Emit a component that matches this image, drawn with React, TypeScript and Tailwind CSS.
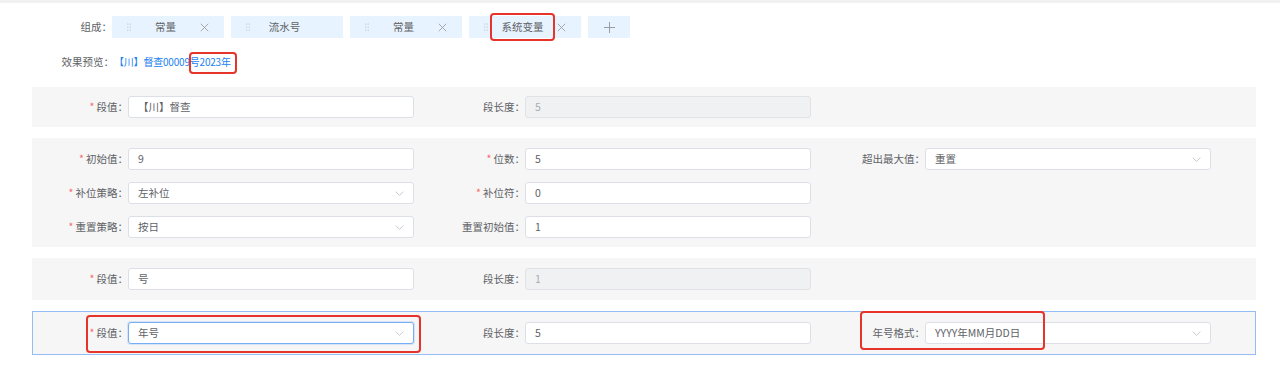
import React from "react";

function Chevron() {
  return (
    <svg width="9" height="5" viewBox="0 0 9 5" fill="none">
      <path d="M0.7 0.6l3.8 3.8 3.8-3.8" stroke="#c0c4cc" strokeWidth="0.9" />
    </svg>
  );
}

function XIcon() {
  return (
    <svg width="9" height="9" viewBox="0 0 9 9" fill="none">
      <path d="M0.8 0.8l7.4 7.4M8.2 0.8l-7.4 7.4" stroke="#9a9da3" strokeWidth="0.9" />
    </svg>
  );
}

function PlusIcon() {
  return (
    <svg width="11" height="11" viewBox="0 0 11 11" fill="none">
      <path d="M5.5 0v11M0 5.5h11" stroke="#9a9da3" strokeWidth="1" />
    </svg>
  );
}

function Handle() {
  return (
    <svg width="4" height="8" viewBox="0 0 4 8">
      {[1, 4, 7].map((y) => (
        <g key={y}>
          <circle cx="0.8" cy={y} r="0.6" fill="#b4b7bc" />
          <circle cx="3.2" cy={y} r="0.6" fill="#b4b7bc" />
        </g>
      ))}
    </svg>
  );
}

function Tag({ text, closable = true }: { text: string; closable?: boolean }) {
  return (
    <div className="w-[112px] h-[22px] bg-[#e7f3fe] flex items-center justify-between pl-[15px] pr-[15px]">
      <Handle />
      <span className="flex-1 text-center">{text}</span>
      <span className={closable ? "flex" : "flex invisible"}>
        <XIcon />
      </span>
    </div>
  );
}

type FieldProps = {
  label: string;
  required?: boolean;
  lw: string;
  value: string;
  select?: boolean;
  disabled?: boolean;
  focused?: boolean;
};

function Field({ label, required, lw, value, select, disabled, focused }: FieldProps) {
  let box = "bg-white border-[#dcdfe6]";
  if (disabled) box = "bg-[#f0f1f3] border-[#e0e2e6] text-[#a8abb2]";
  if (focused) box = "bg-white border-[#76aef5] shadow-[0_0_0_1px_rgba(118,174,245,0.25)]";
  return (
    <div className="flex items-center">
      <div className={`${lw} text-right whitespace-nowrap`}>
        {required && <span className="text-[#f56c6c] mr-[2px]">*</span>}
        {label}
      </div>
      <div className={`w-[286px] h-[22px] rounded-[3px] border flex items-center justify-between pl-[9px] pr-[9px] ${box}`}>
        <span>{value}</span>
        {select && <Chevron />}
      </div>
    </div>
  );
}

export default function App() {
  return (
    <div className="w-[1280px] h-[383px] bg-white overflow-hidden font-['Noto_Sans_CJK_SC','Noto_Sans',sans-serif] text-[10.5px] text-[#606266] leading-none">
      <div className="h-[3px] bg-[#f1f1f1]" />

      <div className="mt-[13px] flex items-center h-[22px]">
        <div className="w-[112px] text-right">组成：</div>
        <div className="relative flex gap-[7px]">
          <Tag text="常量" />
          <Tag text="流水号" closable={false} />
          <Tag text="常量" />
          <Tag text="系统变量" />
          <div className="w-[42px] h-[22px] bg-[#e7f3fe] flex items-center justify-center">
            <PlusIcon />
          </div>
          <div className="absolute left-[378px] top-[-3px] w-[65px] h-[28px] border-2 border-[#e5352b] rounded-[4px]" />
        </div>
      </div>

      <div className="mt-[15px] flex items-center h-[18px]">
        <div className="w-[114px] text-right">效果预览：</div>
        <div className="relative text-[#1b7ff0] text-[10px] tracking-[-0.2px]">
          【川】督查00009号2023年
          <div className="absolute left-[75px] top-[-5px] w-[48px] h-[22px] border-2 border-[#e5352b] rounded-[4px]" />
        </div>
      </div>

      <div className="mt-[16px] ml-[32px] w-[1224px] flex flex-col gap-[11px]">
        <div className="bg-[#f6f6f6] py-[9px] flex">
          <Field label="段值：" required lw="w-[96px]" value="【川】督查" />
          <Field label="段长度：" lw="w-[111px]" value="5" disabled />
        </div>

        <div className="bg-[#f6f6f6] pt-[10px] pb-[9px] flex flex-col gap-[12px]">
          <div className="flex">
            <Field label="初始值：" required lw="w-[96px]" value="9" />
            <Field label="位数：" required lw="w-[111px]" value="5" />
            <Field label="超出最大值：" lw="w-[114px]" value="重置" select />
          </div>
          <div className="flex">
            <Field label="补位策略：" required lw="w-[96px]" value="左补位" select />
            <Field label="补位符：" required lw="w-[111px]" value="0" />
          </div>
          <div className="flex">
            <Field label="重置策略：" required lw="w-[96px]" value="按日" select />
            <Field label="重置初始值：" lw="w-[111px]" value="1" />
          </div>
        </div>

        <div className="bg-[#f6f6f6] py-[10px] flex">
          <Field label="段值：" required lw="w-[96px]" value="号" />
          <Field label="段长度：" lw="w-[111px]" value="1" disabled />
        </div>

        <div className="relative bg-[#f6f6f6] border border-[#93bdf4] py-[10px] flex">
          <Field label="段值：" required lw="w-[95px]" value="年号" select focused />
          <Field label="段长度：" lw="w-[111px]" value="5" />
          <Field label="年号格式：" lw="w-[114px]" value="YYYY年MM月DD日" select />
          <div className="absolute left-[53px] top-[3px] w-[335px] h-[38px] border-2 border-[#e5352b] rounded-[4px]" />
          <div className="absolute left-[827px] top-[-1px] w-[185px] h-[39px] border-2 border-[#e5352b] rounded-[4px]" />
        </div>
      </div>
    </div>
  );
}
